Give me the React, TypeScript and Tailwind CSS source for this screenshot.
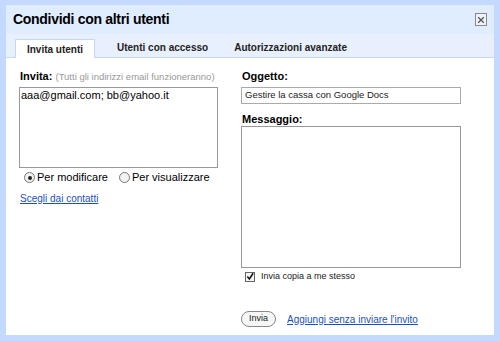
import React from 'react';

function Tab({ label, active }: { label: string; active?: boolean }) {
  if (active) {
    return (
      <div className="-mb-px flex h-[19px] w-[80px] items-center justify-center border border-b-0 border-[#c3d9ff] bg-white text-[10px] font-bold text-[#222]">
        {label}
      </div>
    );
  }
  return <div className="flex h-[19px] items-center text-[10px] font-bold text-[#222]">{label}</div>;
}

export default function App() {
  return (
    <div className="h-[341px] w-[500px] bg-[#c3d9ff] px-[6px] pt-[5px] pb-[6px] font-['Liberation_Sans',Arial,sans-serif]">
      <div className="flex h-full flex-col bg-white">
        <div className="flex h-[29px] items-center justify-between bg-[#e0ecff] pl-[7px] pr-[7px]">
          <h1 className="text-[14px] font-bold tracking-[-0.3px] text-black">Condividi con altri utenti</h1>
          <button className="flex h-[13px] w-[12px] items-center justify-center border border-[#8a8a8a] bg-[#eef2fa]">
            <svg width="8" height="8" viewBox="0 0 8 8">
              <path d="M1.2 1.2 L6.8 6.8 M6.8 1.2 L1.2 6.8" stroke="#555" strokeWidth="1.3" />
            </svg>
          </button>
        </div>
        <div className="flex h-[24px] items-end border-b border-[#c3d9ff] bg-[#e8f0fe] pl-[9px]">
          <Tab label="Invita utenti" active />
          <div className="ml-[22px]">
            <Tab label="Utenti con accesso" />
          </div>
          <div className="ml-[26px]">
            <Tab label="Autorizzazioni avanzate" />
          </div>
        </div>

        <div className="flex flex-1 pl-[13px] pt-[12px]">
          <div className="flex w-[222px] flex-col">
            <div className="ml-[1px] whitespace-nowrap text-[11px] leading-[13px] text-black">
              <span className="font-bold">Invita:</span>{' '}
              <span className="text-[9.5px] text-[#999]">(Tutti gli indirizzi email funzioneranno)</span>
            </div>
            <div className="mt-[4px] h-[81px] w-[199px] border border-[#999] px-[1px] pt-[1px] text-[11px] leading-[13px] text-black">
              aaa@gmail.com; bb@yahoo.it
            </div>
            <div className="mt-[3px] flex h-[13px] items-center text-[11px] text-black">
              <span className="ml-[5px] flex h-[11px] w-[11px] items-center justify-center rounded-full border border-[#777] bg-[#f2f2f2]">
                <span className="h-[4px] w-[4px] rounded-full bg-[#222]" />
              </span>
              <span className="ml-[2px]">Per modificare</span>
              <span className="ml-[11px] h-[11px] w-[11px] rounded-full border border-[#777] bg-[#f2f2f2]" />
              <span className="ml-[2px]">Per visualizzare</span>
            </div>
            <a className="ml-[1px] mt-[7px] text-[10px] text-[#1a4fbf] underline">Scegli dai contatti</a>
          </div>

          <div className="flex w-[222px] flex-col">
            <div className="ml-[1px] text-[11px] font-bold leading-[13px] text-black">Oggetto:</div>
            <div className="mt-[4px] flex h-[17px] w-[220px] items-center border border-[#aaa] pl-[3px] text-[9.5px] text-[#222]">
              Gestire la cassa con Google Docs
            </div>
            <div className="ml-[1px] mt-[9px] text-[11px] font-bold leading-[13px] text-black">Messaggio:</div>
            <div className="h-[142px] w-[220px] border border-[#999]" />
            <div className="mt-[3px] flex h-[11px] items-center text-[9px] text-[#222]">
              <span className="ml-[4px] flex h-[10px] w-[10px] items-center justify-center border border-[#666] bg-[#f4f4f4]">
                <svg width="9" height="9" viewBox="0 0 9 9">
                  <path d="M1.5 4.5 L3.8 7.2 L8 0.8" stroke="#111" strokeWidth="1.7" fill="none" />
                </svg>
              </span>
              <span className="ml-[6px]">Invia copia a me stesso</span>
            </div>
            <div className="mt-[29px] flex items-center">
              <button className="flex h-[16px] w-[35px] items-center justify-center rounded-full border border-[#888] bg-[#f6f6f6] text-[9px] text-[#222]">
                Invia
              </button>
              <a className="ml-[11px] text-[10px] text-[#1a4fbf] underline">Aggiungi senza inviare l'invito</a>
            </div>
          </div>
        </div>
      </div>
    </div>
  );
}
